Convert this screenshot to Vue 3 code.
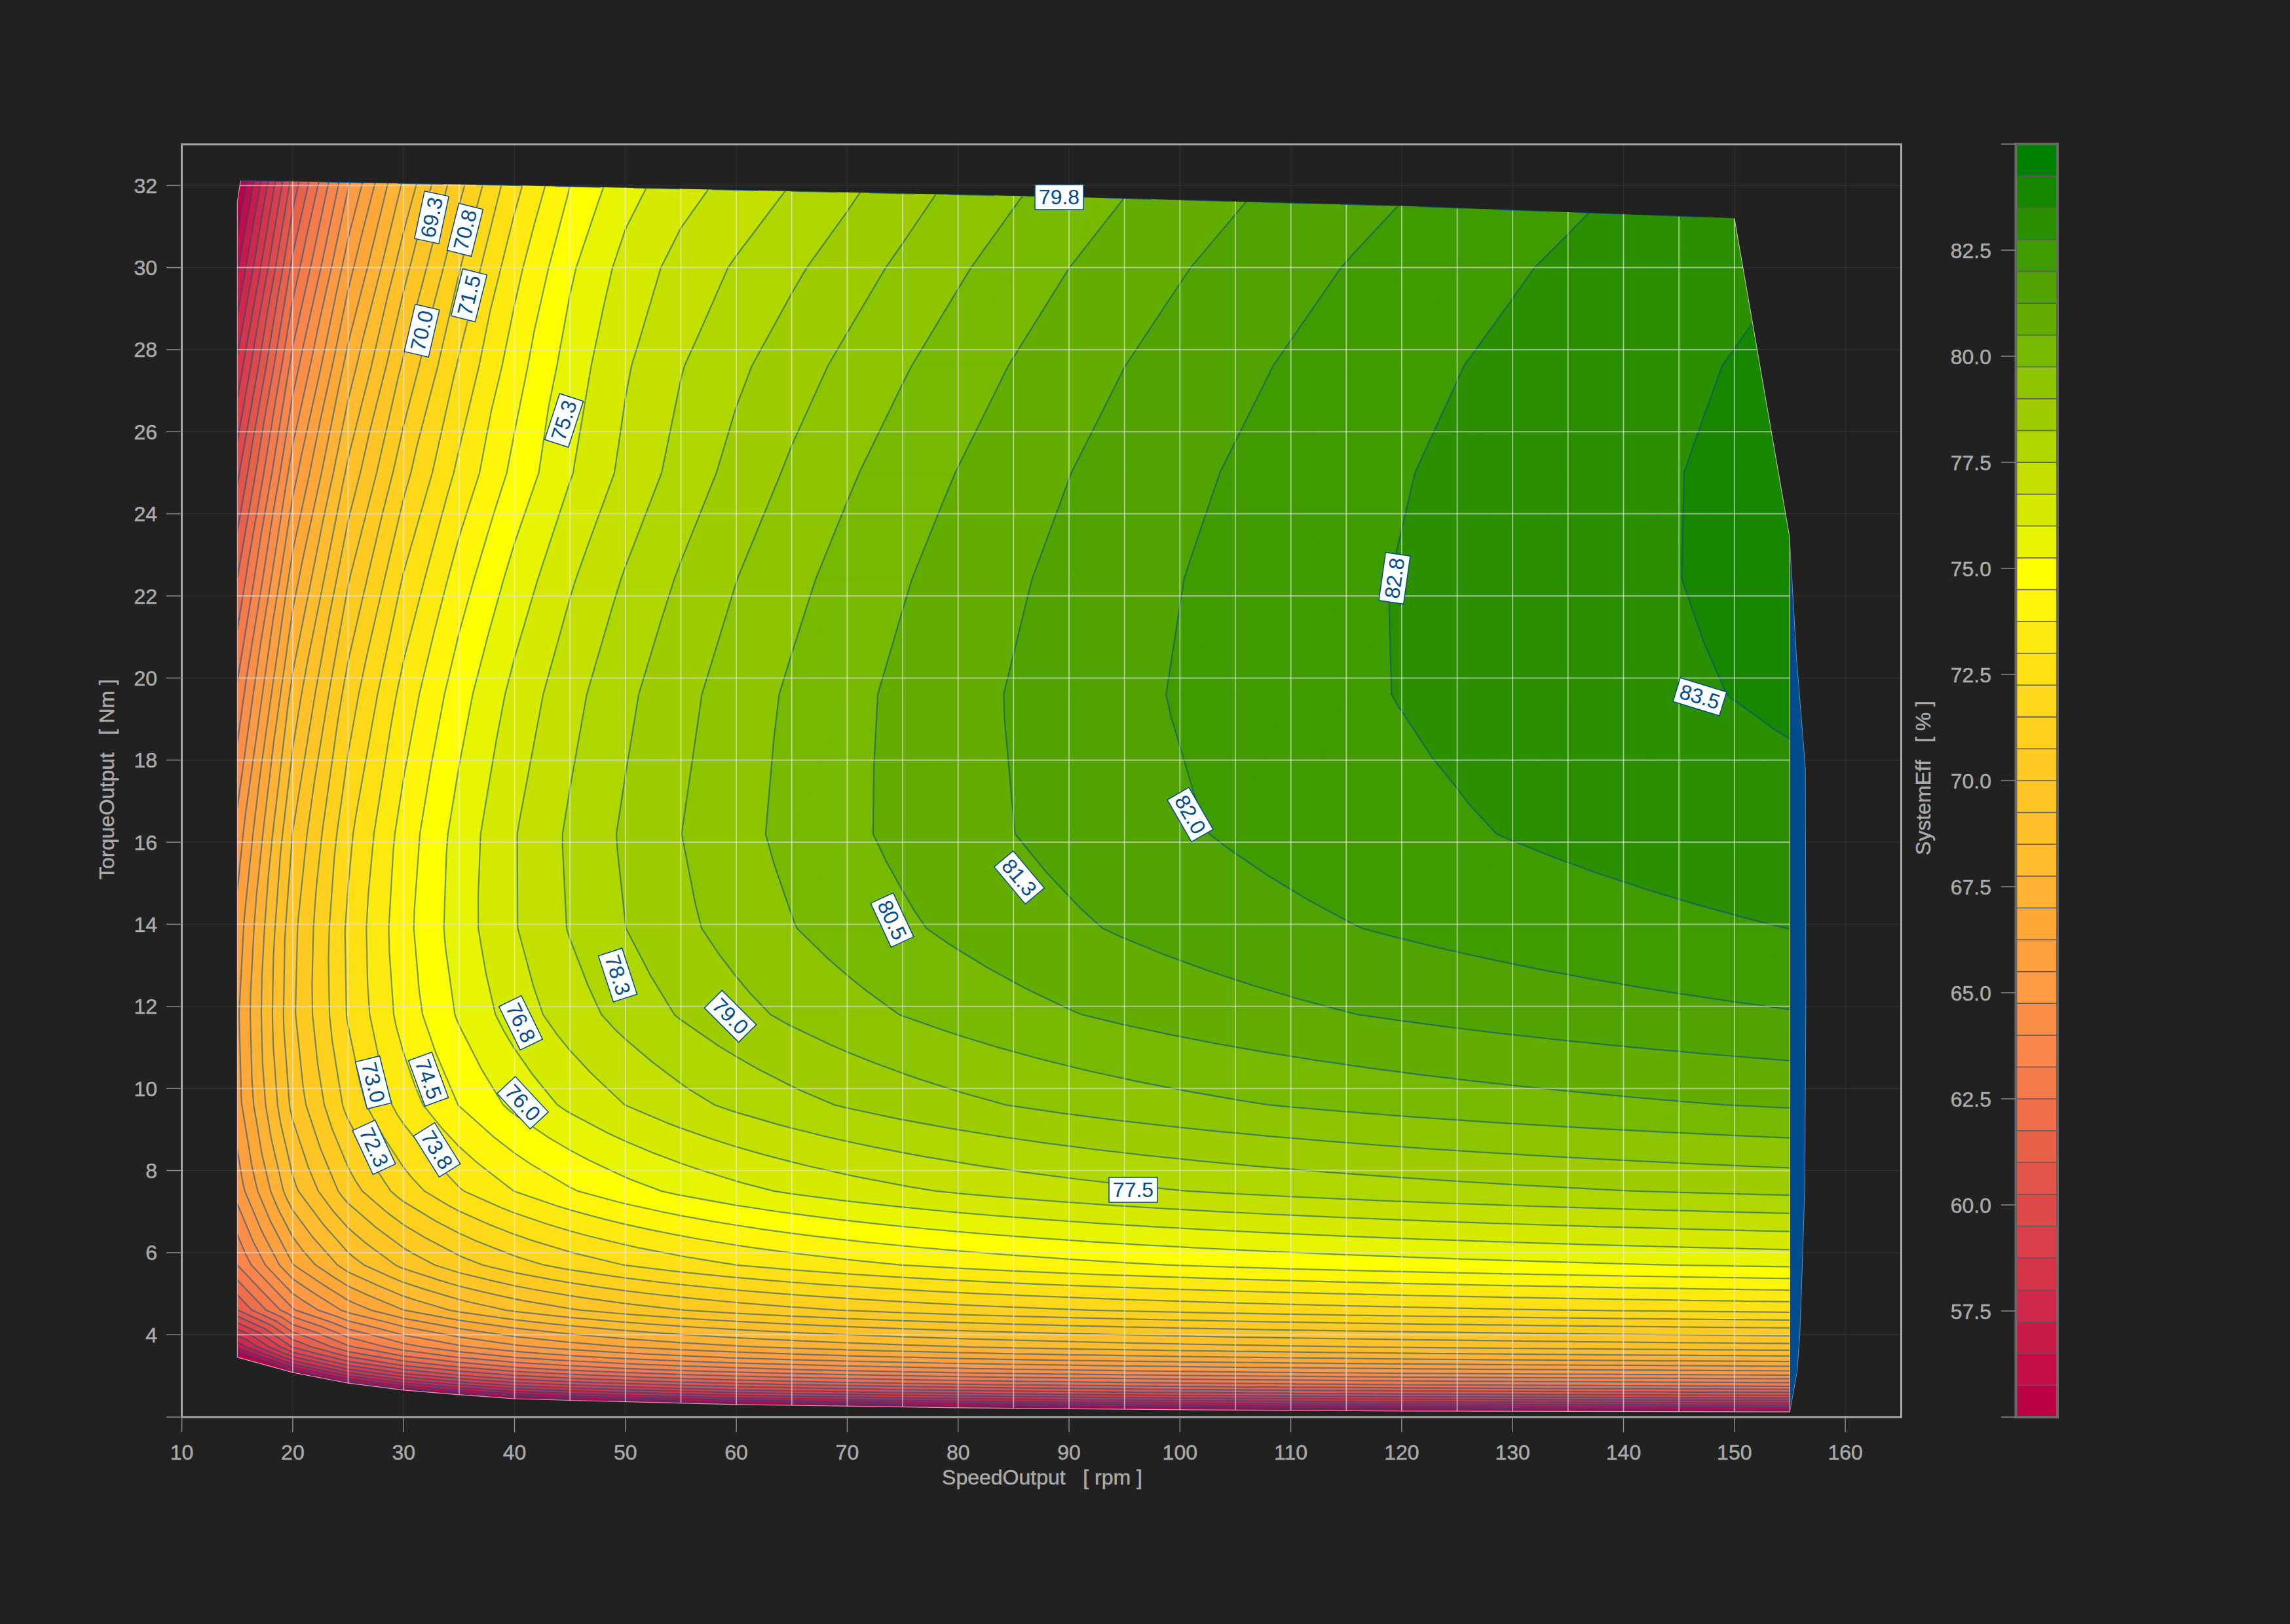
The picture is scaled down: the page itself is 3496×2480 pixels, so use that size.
<template>
  <div class="page">
    <svg class="chart" width="3496" height="2480" viewBox="0 0 3496 2480" xmlns="http://www.w3.org/2000/svg">
      <defs>
        <clipPath id="fill-area">
          <polygon :points="areaPoints" />
        </clipPath>
      </defs>

      <!-- faint grid outside the map -->
      <line v-for="t in torqueTicks" :key="'fh' + t" class="grid-faint" :x1="FRAME.left" :x2="FRAME.right" :y1="Y(t)" :y2="Y(t)" />
      <line v-for="s in speedTicks" :key="'fv' + s" class="grid-faint" :x1="X(s)" :x2="X(s)" :y1="FRAME.top" :y2="FRAME.bottom" />

      <polygon class="strip" :points="stripPoints" />

      <g clip-path="url(#fill-area)">
        <path v-for="b in bands" :key="b.k" :d="b.d" :fill="b.color" :stroke="b.color" stroke-width="1" />
        <path class="contours" :d="contourPath" />
        <line v-for="t in torqueTicks" :key="'gh' + t" class="grid-h" :x1="FRAME.left" :x2="FRAME.right" :y1="Y(t)" :y2="Y(t)" />
        <line v-for="s in gridSpeeds" :key="'gv' + s" class="grid-v" :x1="X(s)" :x2="X(s)" :y1="FRAME.top" :y2="FRAME.bottom" />
      </g>
      <polyline class="area-edge" :points="edgePoints" />
      <polyline class="top-edge" :points="topEdgePoints" />

      <g v-for="l in contourLabels" :key="l.text" :transform="`translate(${l.x} ${l.y}) rotate(${l.angle})`">
        <rect class="label-box" x="-37" y="-19" width="74" height="38" />
        <text class="label-text" y="11">{{ l.text }}</text>
      </g>

      <rect class="frame" :x="FRAME.left" :y="FRAME.top" :width="FRAME.right - FRAME.left" :height="FRAME.bottom - FRAME.top" />

      <g v-for="s in speedTicks" :key="'xt' + s">
        <line class="tick" :x1="X(s)" :x2="X(s)" :y1="FRAME.bottom" y2="2187" />
        <text class="tick-text middle" :x="X(s)" y="2229">{{ s }}</text>
      </g>
      <line class="tick" x1="254" :x2="FRAME.left" :y1="FRAME.bottom" :y2="FRAME.bottom" />
      <g v-for="t in torqueTicks" :key="'yt' + t">
        <line class="tick" x1="254" :x2="FRAME.left" :y1="Y(t)" :y2="Y(t)" />
        <text class="tick-text end" x="240" :y="Y(t) + 11.5">{{ t }}</text>
      </g>

      <text class="axis-title middle" x="1591" y="2267">SpeedOutput&nbsp;&nbsp;&nbsp;[ rpm ]</text>
      <text class="axis-title middle" transform="translate(174 1190) rotate(-90)">TorqueOutput&nbsp;&nbsp;&nbsp;[ Nm ]</text>
      <text class="axis-title middle" transform="translate(2947 1188) rotate(-90)">SystemEff&nbsp;&nbsp;&nbsp;[ % ]</text>

      <!-- colour bar -->
      <rect v-for="(c, i) in COLORS" :key="'cb' + i" class="bar-band" :fill="c" :x="BAR.left" :y="BAR.bottom - (i + 1) * BAR.step" :width="BAR.right - BAR.left" :height="BAR.step" />
      <rect class="bar-frame" :x="BAR.left" :y="BAR.top" :width="BAR.right - BAR.left" :height="BAR.bottom - BAR.top" />
      <g v-for="t in barTicks" :key="'bt' + t.v">
        <line class="tick" x1="3055" :x2="BAR.left" :y1="t.y" :y2="t.y" />
        <text v-if="t.label" class="tick-text end" x="3040" :y="t.y + 11.5">{{ t.label }}</text>
      </g>
    </svg>
  </div>
</template>

<script setup>
const FRAME = { left: 277.5, right: 2902.5, top: 220.5, bottom: 2164 }
const BAR = { left: 3077.5, right: 3141, top: 220, bottom: 2164, step: 48.6 }

const X = (speed) => +(277.6 + (speed - 10) * 16.93).toFixed(1)
const Y = (torque) => +(283.2 + (32 - torque) * 62.68).toFixed(1)

// band colours, lowest (55.0) to highest (85.0), 0.75 apart
const COLORS = [
  '#bb0044', '#c20d46', '#ca1a48', '#cf2848', '#d63548', '#da3e48', '#de4a49', '#e2564a',
  '#e8624a', '#ef6f4a', '#f57c4a', '#f8864a', '#fc8f48', '#ff9a44', '#ffa03e', '#ffa838',
  '#ffb233', '#ffbc2e', '#ffc029', '#ffc426', '#ffca22', '#ffd01e', '#ffd81a', '#ffe014',
  '#ffea0f', '#fff508', '#ffff00', '#e8f500', '#d6ea00', '#c4e000', '#b0d600', '#9ecc00',
  '#8cc400', '#77b800', '#63ad00', '#50a300', '#3f9b00', '#2b9000', '#178700', '#007f00',
]
const BASE = 55
const STEP = 0.75

const BOTTOM_EDGE = [
  [15, 3.45], [20, 3.08], [25, 2.82], [30, 2.65], [35, 2.54], [40, 2.44], [45, 2.4],
  [60, 2.3], [80, 2.22], [100, 2.17], [120, 2.14], [155, 2.12],
]
const TOP_EDGE = [
  [15.3, 32.12], [40, 32], [90, 31.72], [120, 31.5], [150, 31.2], [155, 23.4],
]
const STRIP = [
  [155, 23.3], [155.6, 20.5], [156.4, 17.8], [156.45, 12.3], [156.35, 7.6], [156.1, 5.5],
  [155.9, 4], [155.65, 3.1], [155, 2.12],
]

const lookup = (table, x) => {
  for (let i = 1; i < table.length; i++) {
    if (x <= table[i][0]) {
      const [x0, y0] = table[i - 1]
      const [x1, y1] = table[i]
      return y0 + ((y1 - y0) * (x - x0)) / (x1 - x0)
    }
  }
  return table[table.length - 1][1]
}
const toPoints = (list) => list.map(([s, t]) => `${X(s)},${Y(t)}`).join(' ')

// losses over output power, gives the efficiency map
const efficiency = (speed, torque) => {
  const floor = lookup(BOTTOM_EDGE, speed)
  const hump = 0.005 * Math.exp(-(((torque - 21) / 7.5) ** 2)) * Math.min(1, speed / 80)
  const upperLeft =
    -0.024 * Math.exp(-(((speed - 46) / 14) ** 2)) * Math.max(0, Math.min(1, (torque - 25) / 7))
  const ratio =
    (4 + 0.0062 * torque * torque) / speed +
    1.28 / torque +
    0.071 +
    0.0007 * torque +
    0.12 * Math.exp(-(torque - floor) / 0.5) +
    hump +
    upperLeft
  return 100 / (1 + ratio)
}

const speeds = []
for (let s = 15; s <= 155; s += 5) speeds.push(s)
const LOW_ROWS = [0, 0.12, 0.25, 0.4, 0.6, 0.8, 1]
const HIGH_ROWS = [4.6, 5.7, 7.5, 9.6, 11.8, 13.9, 16.2, 19.6, 22.4, 25, 27.6, 30, 33]

const rowTorque = (row, speed) => {
  if (row < LOW_ROWS.length) {
    const floor = lookup(BOTTOM_EDGE, speed)
    return floor + (3.7 - floor) * LOW_ROWS[row]
  }
  return HIGH_ROWS[row - LOW_ROWS.length]
}
const rowCount = LOW_ROWS.length + HIGH_ROWS.length

const node = (s, row) => {
  const t = rowTorque(row, s)
  return { x: X(s), y: Y(t), v: efficiency(s, t) }
}

const triangles = []
for (let i = 0; i < speeds.length - 1; i++) {
  for (let r = 0; r < rowCount - 1; r++) {
    const a = node(speeds[i], r)
    const b = node(speeds[i + 1], r)
    const c = node(speeds[i + 1], r + 1)
    const d = node(speeds[i], r + 1)
    triangles.push([a, b, c], [a, c, d])
  }
}

const crossing = (p, q, level) => {
  const f = (level - p.v) / (q.v - p.v)
  return { x: p.x + (q.x - p.x) * f, y: p.y + (q.y - p.y) * f, v: level }
}

// keep the part of a polygon on one side of a level
const clip = (poly, level, above) => {
  const out = []
  poly.forEach((p, i) => {
    const q = poly[(i + 1) % poly.length]
    const pIn = above ? p.v >= level : p.v <= level
    const qIn = above ? q.v >= level : q.v <= level
    if (pIn) out.push(p)
    if (pIn !== qIn) out.push(crossing(p, q, level))
  })
  return out
}

const polyPath = (poly) => 'M' + poly.map((p) => `${p.x.toFixed(1)} ${p.y.toFixed(1)}`).join('L') + 'Z'

const bandPaths = COLORS.map(() => [])
const contourParts = []
const bandOf = (v) => Math.max(0, Math.min(COLORS.length - 1, Math.floor((v - BASE) / STEP)))

for (const tri of triangles) {
  const vals = tri.map((p) => p.v)
  const lo = bandOf(Math.min(...vals))
  const hi = bandOf(Math.max(...vals))
  for (let k = lo; k <= hi; k++) {
    let poly = tri
    if (k > 0) poly = clip(poly, BASE + k * STEP, true)
    if (k < COLORS.length - 1 && poly.length) poly = clip(poly, BASE + (k + 1) * STEP, false)
    if (poly.length > 2) bandPaths[k].push(polyPath(poly))
  }
  for (let k = lo + 1; k <= hi; k++) {
    const level = BASE + k * STEP
    const hits = []
    tri.forEach((p, i) => {
      const q = tri[(i + 1) % 3]
      if (p.v < level !== q.v < level) hits.push(crossing(p, q, level))
    })
    if (hits.length === 2) {
      contourParts.push(`M${hits[0].x.toFixed(1)} ${hits[0].y.toFixed(1)}L${hits[1].x.toFixed(1)} ${hits[1].y.toFixed(1)}`)
    }
  }
}

const bands = bandPaths.map((parts, k) => ({ k, color: COLORS[k], d: parts.join('') }))
const contourPath = contourParts.join('')

const LEFT_CORNER = [15, 31.6]
const areaPoints = toPoints([...BOTTOM_EDGE, ...[...TOP_EDGE].reverse(), LEFT_CORNER])
const edgePoints = toPoints([TOP_EDGE[4], TOP_EDGE[5], BOTTOM_EDGE[11], ...[...BOTTOM_EDGE].reverse(), LEFT_CORNER, TOP_EDGE[0]])
const topEdgePoints = toPoints(TOP_EDGE.slice(0, 5))
const stripPoints = toPoints(STRIP)

const speedTicks = []
for (let s = 10; s <= 160; s += 10) speedTicks.push(s)
const gridSpeeds = speeds.slice(1, -1)
const torqueTicks = []
for (let t = 4; t <= 32; t += 2) torqueTicks.push(t)

const barTicks = [85, 82.5, 80, 77.5, 75, 72.5, 70, 67.5, 65, 62.5, 60, 57.5, 55].map((v) => ({
  v,
  y: BAR.bottom - ((v - BASE) / 30) * (BAR.bottom - BAR.top),
  label: v === 85 || v === 55 ? '' : v.toFixed(1),
}))

const contourLabels = [
  { text: '69.3', x: 659, y: 332, angle: -78 },
  { text: '70.8', x: 710, y: 351, angle: -76 },
  { text: '71.5', x: 716, y: 451, angle: -76 },
  { text: '70.0', x: 644, y: 505, angle: -77 },
  { text: '75.3', x: 861, y: 642, angle: -72 },
  { text: '73.0', x: 570, y: 1653, angle: 76 },
  { text: '74.5', x: 654, y: 1648, angle: 70 },
  { text: '72.3', x: 571, y: 1752, angle: 65 },
  { text: '73.8', x: 667, y: 1756, angle: 58 },
  { text: '76.0', x: 798, y: 1684, angle: 47 },
  { text: '76.8', x: 795, y: 1562, angle: 64 },
  { text: '79.0', x: 1115, y: 1552, angle: 45 },
  { text: '78.3', x: 943, y: 1489, angle: 72 },
  { text: '80.5', x: 1362, y: 1405, angle: 65 },
  { text: '81.3', x: 1556, y: 1340, angle: 50 },
  { text: '82.0', x: 1817, y: 1244, angle: 60 },
  { text: '82.8', x: 2129, y: 883, angle: -82 },
  { text: '83.5', x: 2595, y: 1064, angle: 17 },
  { text: '79.8', x: 1617, y: 301, angle: 0 },
  { text: '77.5', x: 1730, y: 1817, angle: 0 },
]
</script>

<style scoped>
.page {
  width: 3496px;
  height: 2480px;
  background: #212121;
  overflow: hidden;
}

.chart {
  display: block;
}

.grid-faint {
  stroke: rgba(255, 255, 255, 0.06);
  stroke-width: 1.5;
}

.strip {
  fill: #004c8c;
  stroke: rgba(200, 220, 240, 0.5);
  stroke-width: 1;
}

.contours {
  fill: none;
  stroke: rgba(0, 76, 140, 0.55);
  stroke-width: 2.2;
  stroke-linecap: round;
}

.grid-h {
  stroke: rgba(225, 225, 225, 0.6);
  stroke-width: 2;
}

.grid-v {
  stroke: rgba(240, 240, 240, 0.6);
  stroke-width: 1.8;
}

.area-edge {
  fill: none;
  stroke: rgba(255, 230, 240, 0.65);
  stroke-width: 1.2;
}

.top-edge {
  fill: none;
  stroke: rgba(0, 76, 140, 0.7);
  stroke-width: 1.5;
  stroke-dasharray: 70 50;
}

.label-box {
  fill: #fff;
  stroke: #004c8c;
  stroke-width: 1.5;
}

.label-text {
  font-family: 'Liberation Sans', Arial, sans-serif;
  font-size: 32px;
  fill: #004c8c;
  text-anchor: middle;
}

.frame {
  fill: none;
  stroke: #a8a8a8;
  stroke-width: 3;
}

.tick {
  stroke: #8a8a8a;
  stroke-width: 1.5;
}

.tick-text,
.axis-title {
  font-family: 'Liberation Sans', Arial, sans-serif;
  font-size: 32px;
  fill: #ababab;
  stroke: #ababab;
  stroke-width: 0.5;
}

.middle {
  text-anchor: middle;
}

.end {
  text-anchor: end;
}

.bar-band {
  stroke: rgba(90, 90, 100, 0.9);
  stroke-width: 1.5;
}

.bar-frame {
  fill: none;
  stroke: #686868;
  stroke-width: 4;
}
</style>
